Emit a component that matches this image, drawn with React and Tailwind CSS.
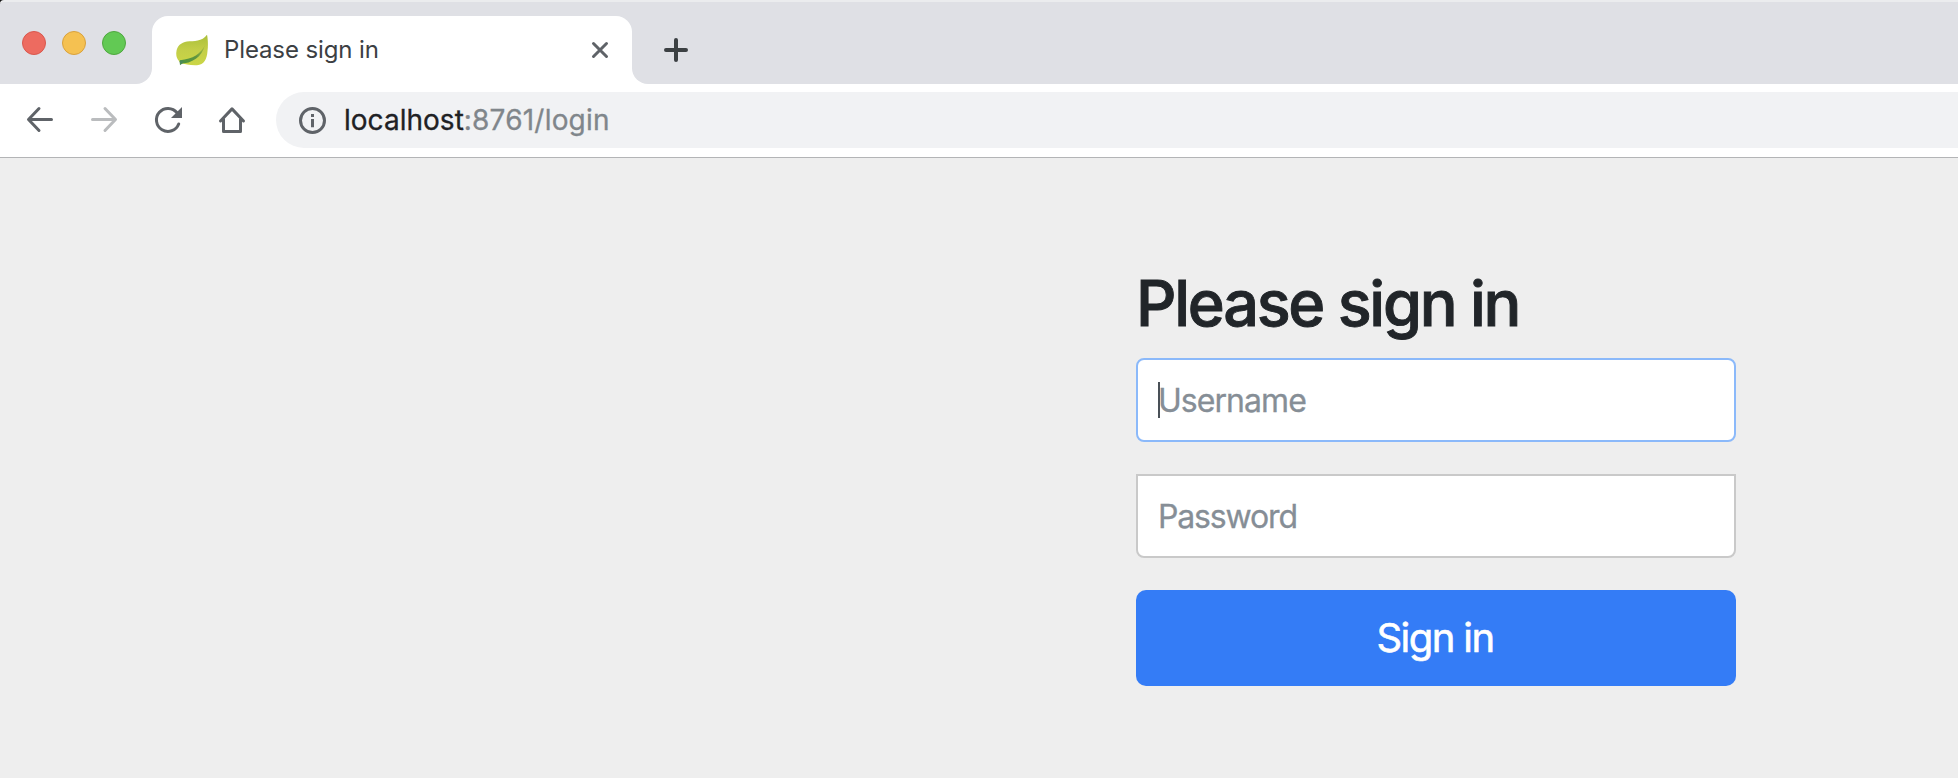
import React from "react";

function NavButton({ label, children, className = "text-[#5f6368]" }) {
  return (
    <button aria-label={label} className={`flex h-14 w-16 items-center justify-center ${className}`}>
      <svg width="32" height="32" viewBox="0 0 32 32" fill="none" stroke="currentColor" strokeWidth="3" strokeLinecap="round" strokeLinejoin="round">
        {children}
      </svg>
    </button>
  );
}

function Leaf() {
  return (
    <svg width="32" height="32" viewBox="0 0 32 32" className="shrink-0">
      <defs>
        <linearGradient id="leaf" x1="0" y1="0" x2="0" y2="1">
          <stop offset="0" stopColor="#aabf3a" />
          <stop offset="0.5" stopColor="#c3ce48" />
          <stop offset="1" stopColor="#cbd646" />
        </linearGradient>
        <linearGradient id="vein" x1="0" y1="1" x2="1" y2="0">
          <stop offset="0" stopColor="#4a9440" />
          <stop offset="0.5" stopColor="#5f9440" />
          <stop offset="1" stopColor="#b4c440" />
        </linearGradient>
      </defs>
      <path d="M31 .8C32 5 32.200 12 31.500 17C31 25 28 31 21 31.200C14 31.600 9 29.500 4.500 29.500L3 27C1 25 0 22 .3 18.500C1 12 5 8.500 11 7.600C18 6.800 26 8 31 .8Z" fill="url(#leaf)" />
      <path d="M29 11C25 19.500 17 25.200 4 26.200L4 29.700C16 29.500 26 23 29 11Z" fill="url(#vein)" />
      <path d="M3.500 26.800L7.500 26.500L6.300 29.600L4 31.300Z" fill="#4a8b58" />
    </svg>
  );
}

function TabStrip() {
  return (
    <div className="bg-[#111111]">
      <header className="flex h-[84px] items-end rounded-tl-[4px] border-t-2 border-[#ebecee] bg-[#dfe0e5]">
        <div className="flex h-[82px] w-[152px] pt-[29px] pl-[22px]">
          <div className="flex gap-4">
            <span className="size-6 rounded-full border border-[#d9574d] bg-[#ed6b60]" />
            <span className="size-6 rounded-full border border-[#d9a13c] bg-[#f5c151]" />
            <span className="size-6 rounded-full border border-[#4fa73f] bg-[#62c954]" />
          </div>
        </div>
        <div className="-ml-4 h-4 w-4 bg-white">
          <div className="h-4 w-4 rounded-br-2xl bg-[#dfe0e5]" />
        </div>
        <div className="flex h-[68px] w-[480px] items-center rounded-t-2xl bg-white pr-4 pl-6">
          <Leaf />
          <span className="ml-4 flex-1 text-[24px] leading-[30px] tracking-[-0.12px] whitespace-nowrap text-[#3c4043]">Please sign in</span>
          <button aria-label="Close tab" className="flex size-8 items-center justify-center">
            <svg width="20" height="20" viewBox="0 0 20 20" stroke="#5f6368" strokeWidth="3" strokeLinecap="round">
              <path d="M3.500 3.500L16.500 16.500M16.500 3.500L3.500 16.500" />
            </svg>
          </button>
        </div>
        <div className="h-4 w-4 bg-white">
          <div className="h-4 w-4 rounded-bl-2xl bg-[#dfe0e5]" />
        </div>
        <button aria-label="New tab" className="mb-[18px] ml-3 flex size-8 items-center justify-center">
          <svg width="24" height="24" viewBox="0 0 24 24" stroke="#3c4043" strokeWidth="4" strokeLinecap="round">
            <path d="M12 2V22M2 12H22" />
          </svg>
        </button>
      </header>
    </div>
  );
}

function Toolbar() {
  return (
    <nav className="flex h-[74px] items-start border-b border-[#b3b4b6] bg-white pt-2 pl-2">
      <NavButton label="Back"><path d="M27.500 15.500H5M15 4.500L4.500 15.500L15 26.500" /></NavButton>
      <NavButton label="Forward" className="text-[#babcbe]"><path d="M4.500 15.500H27M17 4.500L27.500 15.500L17 26.500" /></NavButton>
      <NavButton label="Reload">
        <path d="M26.700 20A11.500 11.500 0 1 1 25 8.800" />
        <path d="M30 3V14H19Z" fill="currentColor" stroke="none" />
      </NavButton>
      <NavButton label="Home"><path d="M4.500 17L16 4.900L27.500 17M7.500 15V27.500H24.500V15" /></NavButton>
      <div className="ml-3 flex h-14 flex-1 items-center rounded-l-full bg-[#f1f2f4] pl-5">
        <svg width="32" height="32" viewBox="0 0 32 32" fill="none" stroke="#5f6368" strokeWidth="3">
          <circle cx="16.500" cy="16.500" r="12" />
          <path d="M16.500 10V13M16.500 15V23.300" />
        </svg>
        <span className="ml-4 text-[28px] leading-[36px] tracking-[0.02px] whitespace-nowrap text-[#202124] [-webkit-text-stroke:0.3px_currentColor]">
          localhost<span className="tracking-[0.2px] text-[#80868b]">:8761/login</span>
        </span>
      </div>
    </nav>
  );
}

export default function App() {
  return (
    <div className="flex h-[778px] w-[1958px] flex-col overflow-hidden bg-[#eeeeee] font-['Inter',sans-serif]">
      <TabStrip />
      <Toolbar />
      <main className="ml-[1136px] w-[600px] pt-[107px]">
        <form className="flex flex-col">
          <h2 className="mb-[17px] h-[76px] text-[63px] leading-[76px] font-medium tracking-[-2.25px] whitespace-nowrap text-[#212529] [-webkit-text-stroke:0.9px_#212529]">Please sign in</h2>
          <div className="relative">
            <input placeholder="Username" className="block h-[84px] w-full rounded-lg border-2 border-[#8bb9fa] bg-white px-5 text-[32px] tracking-[-0.95px] outline-none placeholder:text-[#868e96] placeholder:[-webkit-text-stroke:0.3px_#868e96]" />
            <span className="absolute top-6 left-[22px] h-9 w-0.5 bg-[#495057]" />
          </div>
          <input type="password" placeholder="Password" className="mt-8 block h-[84px] w-full rounded-b-lg border-2 border-[#c9c9c9] bg-white px-5 text-[32px] tracking-[-1.15px] outline-none placeholder:text-[#868e96] placeholder:[-webkit-text-stroke:0.3px_#868e96]" />
          <button type="button" className="mt-8 h-24 rounded-[10px] bg-[#347cf6] pr-0.5 text-[40px] tracking-[-1.6px] text-white [-webkit-text-stroke:0.6px_#fff]">Sign in</button>
        </form>
      </main>
    </div>
  );
}
